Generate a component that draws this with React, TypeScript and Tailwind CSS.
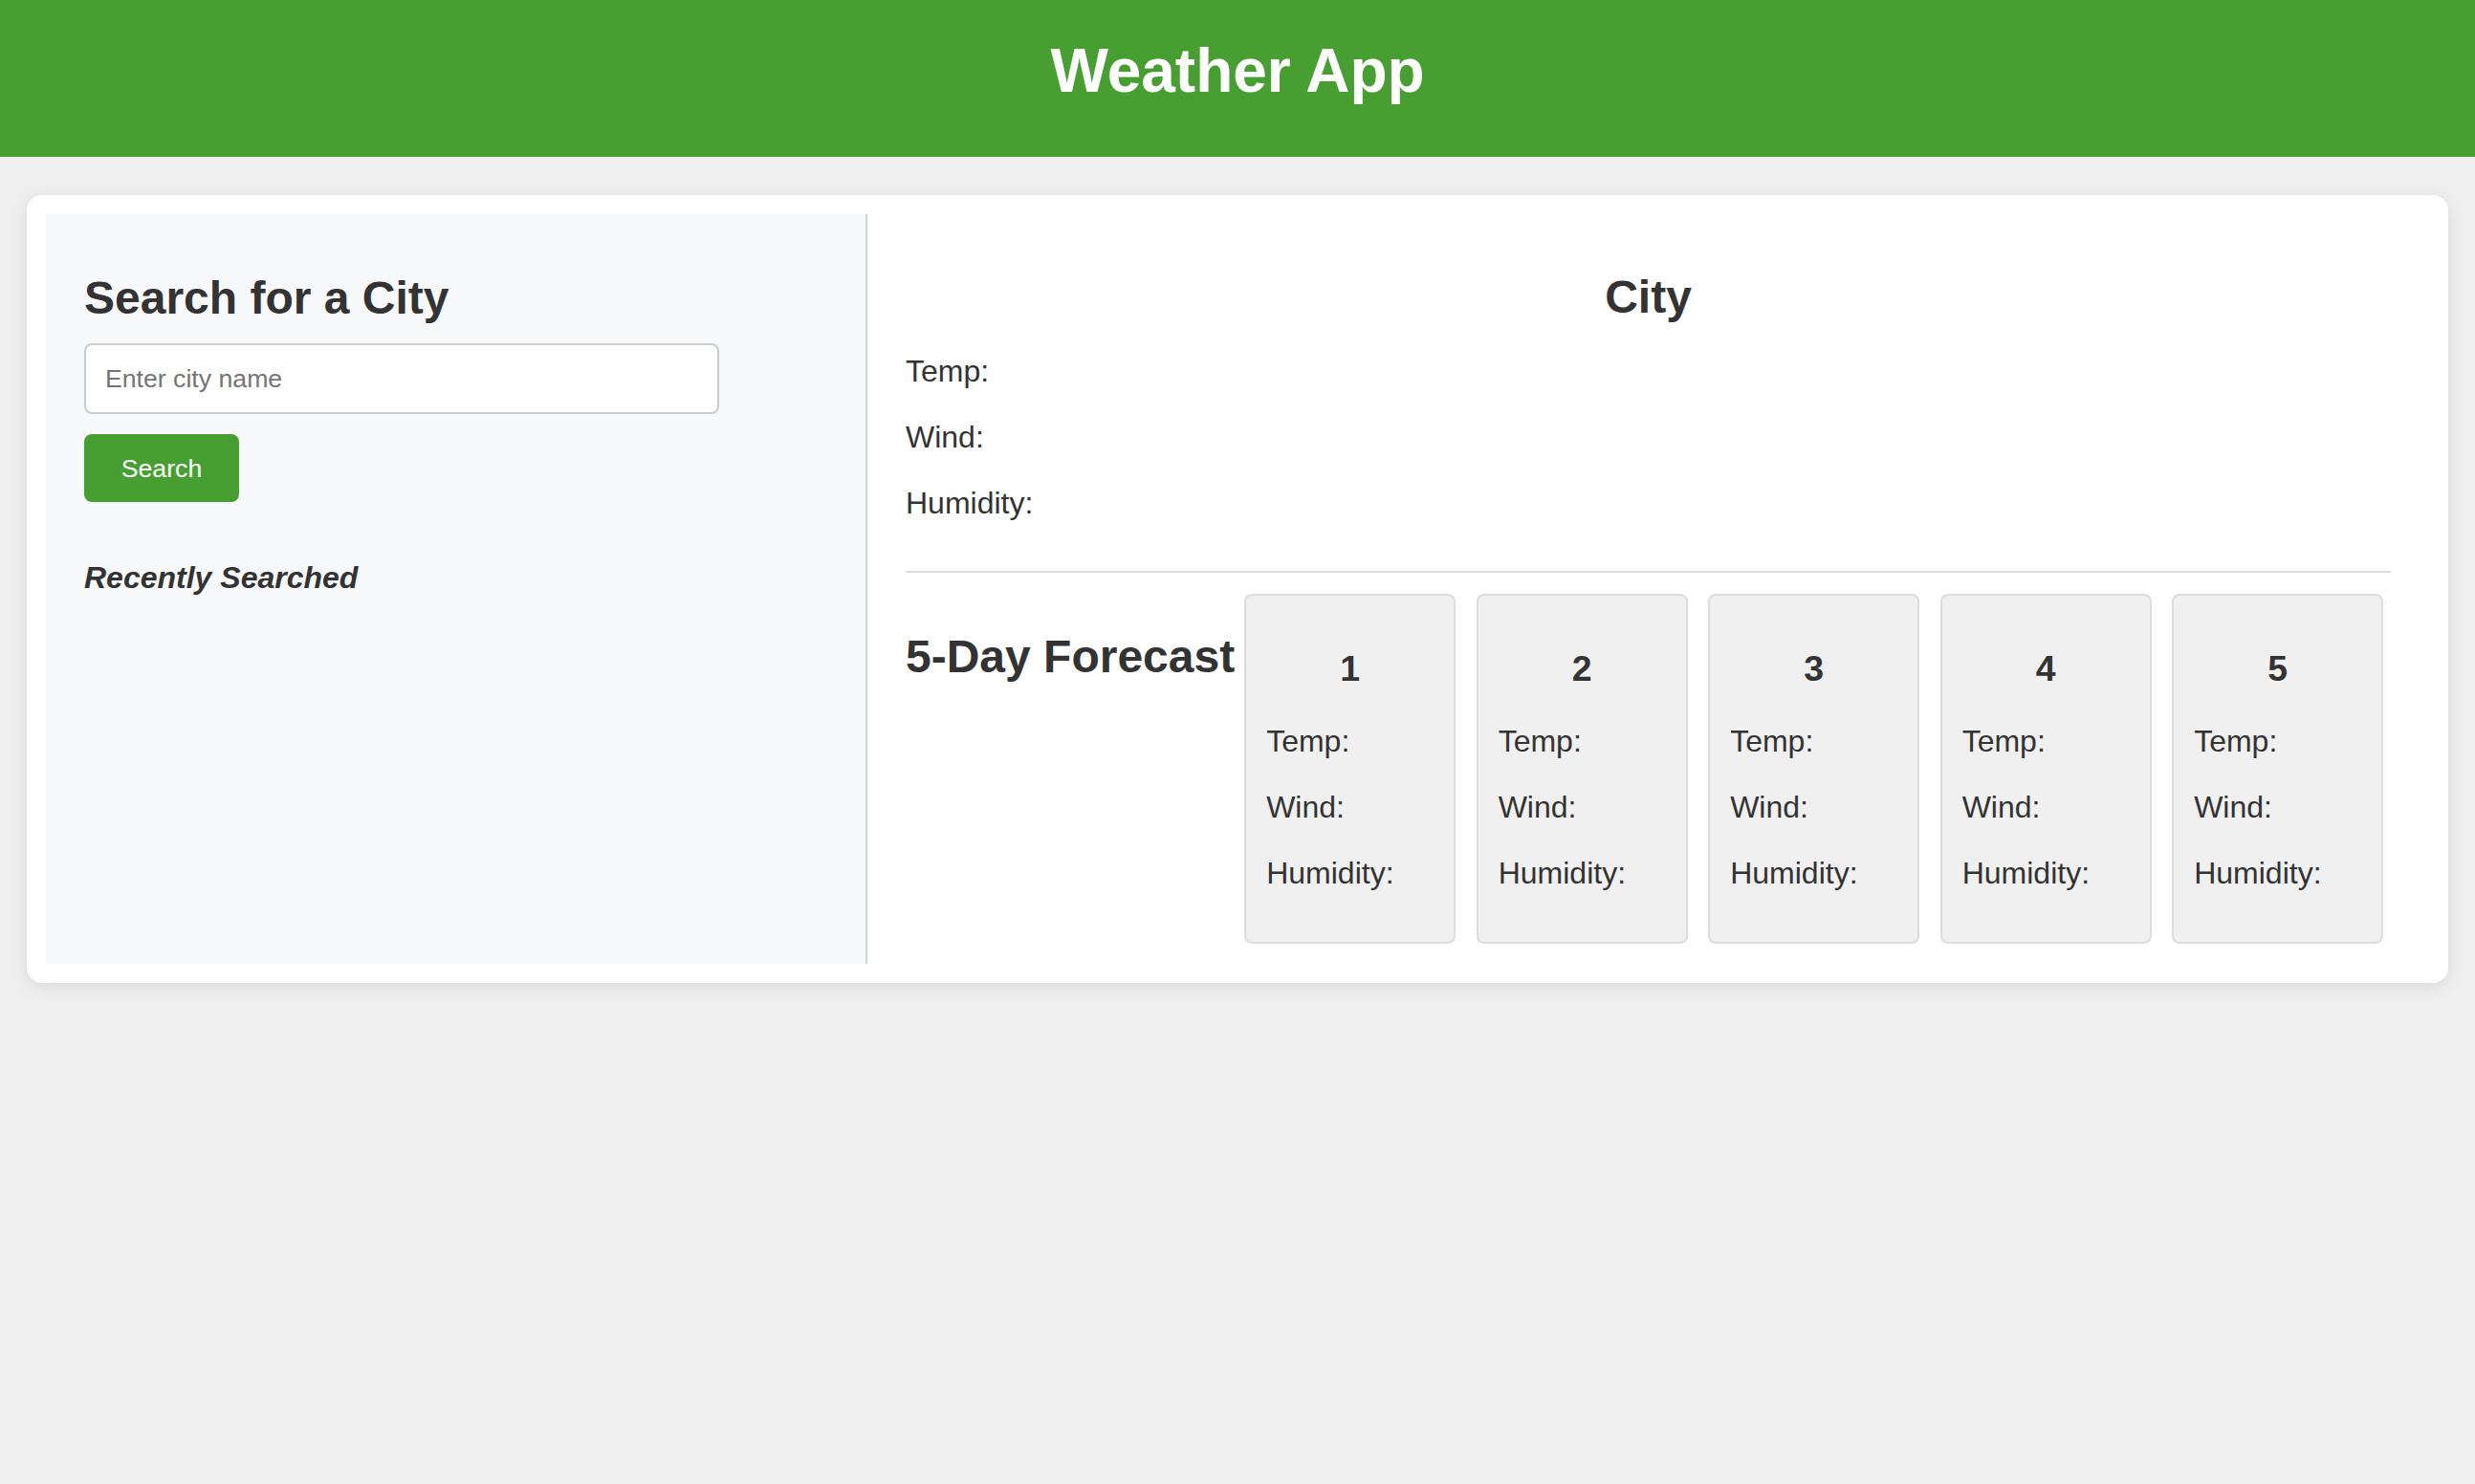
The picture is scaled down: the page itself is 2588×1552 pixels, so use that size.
import React from "react";

const days = ["1", "2", "3", "4", "5"];

export default function App() {
  return (
    <div className="min-h-screen bg-[#f0f0f0] font-['Liberation_Sans',Arial,sans-serif] text-[#333333]">
      <header className="h-[164px] bg-[#489f31] pt-[37px] text-center">
        <h1 className="text-[64px] leading-[74px] font-bold text-white">Weather App</h1>
      </header>

      <main className="mx-[28px] mt-[40px] flex rounded-[16px] bg-white p-[20px] shadow-[0_4px_20px_rgba(0,0,0,0.1)]">
        <aside className="w-[859px] shrink-0 border-r-2 border-[#d2d2d2] bg-[#f7f8fa] px-[40px] pt-[60px]">
          <h2 className="text-[48px] leading-[55px] font-bold">Search for a City</h2>
          <input
            type="text"
            placeholder="Enter city name"
            className="mt-[20px] block h-[74px] w-[664px] rounded-[8px] border-2 border-[#cccccc] bg-white px-[20px] text-[26.67px] text-[#333] placeholder:text-[#757575] outline-none"
          />
          <button className="mt-[21px] block h-[71px] w-[162px] rounded-[8px] bg-[#489f31] text-[26.67px] text-white">
            Search
          </button>
          <h3 className="mt-[61px] text-[32px] leading-[37px] font-bold italic">Recently Searched</h3>
        </aside>

        <section className="min-w-0 flex-1 px-[40px] pt-[59px] pb-[21px]">
          <h2 className="text-center text-[48px] leading-[55px] font-bold">City</h2>
          <p className="mt-[32px] text-[32px] leading-[37px]">Temp:</p>
          <p className="mt-[32px] text-[32px] leading-[37px]">Wind:</p>
          <p className="mt-[32px] text-[32px] leading-[37px]">Humidity:</p>
          <hr className="mt-[52px] border-0 border-t-2 border-[#dddddd]" />

          <div className="mt-[22px] flex items-start">
            <h2 className="mt-[38px] shrink-0 whitespace-nowrap text-[48px] leading-[55px] font-bold">
              5-Day Forecast
            </h2>
            <div className="ml-[10px] flex gap-[21.5px]">
              {days.map((d) => (
                <div
                  key={d}
                  className="w-[221px] shrink-0 rounded-[8px] border-2 border-[#dddddd] bg-[#f0f0f0] px-[21px] pt-[55px] pb-[53px]"
                >
                  <h3 className="text-center text-[37.44px] leading-[43px] font-bold">{d}</h3>
                  <p className="mt-[36px] text-[32px] leading-[37px]">Temp:</p>
                  <p className="mt-[32px] text-[32px] leading-[37px]">Wind:</p>
                  <p className="mt-[32px] text-[32px] leading-[37px]">Humidity:</p>
                </div>
              ))}
            </div>
          </div>
        </section>
      </main>
    </div>
  );
}
